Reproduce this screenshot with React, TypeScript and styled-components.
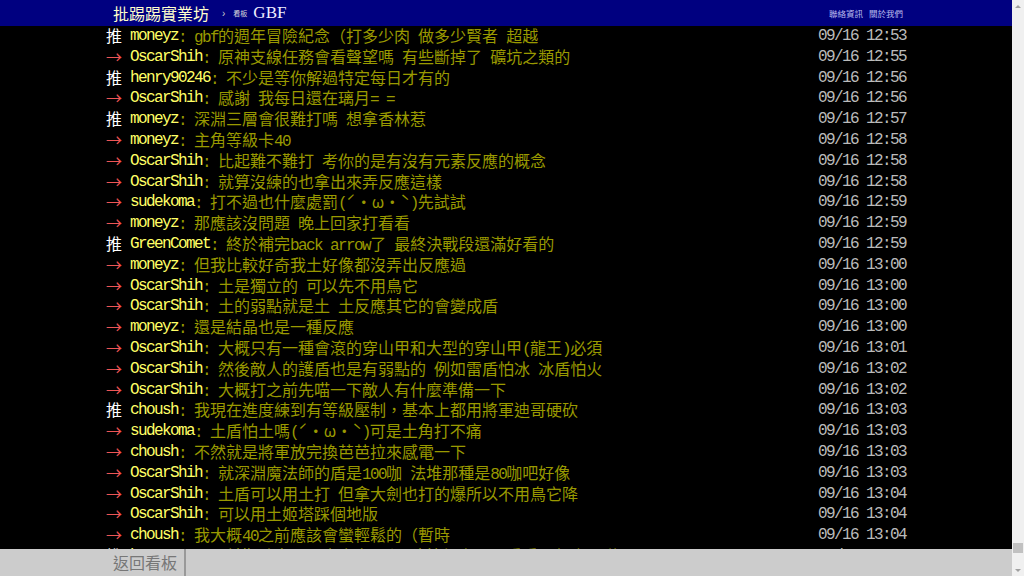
import styled, { createGlobalStyle } from "styled-components";

const GlobalStyle = createGlobalStyle`
  html, body {
    margin: 0;
    padding: 0;
    background: #000;
    overflow: hidden;
  }
`;

const Page = styled.div`
  display: flex;
  width: 100vw;
  height: 100vh;
`;

const Main = styled.div`
  flex: 1;
  min-width: 0;
  display: flex;
  flex-direction: column;
`;

const TopBar = styled.div`
  height: 26px;
  flex-shrink: 0;
  background: #000080;
  display: flex;
  justify-content: center;
`;

const TopInner = styled.div`
  width: 800px;
  box-sizing: border-box;
  padding: 0 3px 0 7px;
  display: flex;
  align-items: center;
`;

const Logo = styled.a`
  font-family: "Noto Sans CJK TC", sans-serif;
  font-size: 16px;
  color: #ffffcc;
  line-height: 26px;
`;

const Crumb = styled.span`
  font-family: "Liberation Sans", sans-serif;
  font-size: 10px;
  color: #ccc;
  margin: 0 8px 0 13px;
`;

const BoardLabel = styled.span`
  font-family: "Noto Sans CJK TC", sans-serif;
  font-size: 7px;
  color: #ddd;
  margin-right: 6px;
`;

const BoardName = styled.span`
  font-family: "Liberation Serif", serif;
  font-size: 17px;
  color: #eef;
`;

const Links = styled.div`
  margin-left: auto;
  display: flex;
  gap: 6px;
`;

const SmallLink = styled.a`
  font-family: "Noto Sans CJK TC", sans-serif;
  font-size: 8.5px;
  color: #bbe;
`;

const Content = styled.div`
  flex: 1;
  overflow: hidden;
  background: #000;
`;

const Column = styled.div`
  width: 800px;
  margin: -1px auto 0;
`;

const Row = styled.div`
  height: 20.8px;
  line-height: 20.8px;
  display: flex;
  justify-content: space-between;
  white-space: pre;
  font-size: 16px;
`;

const Left = styled.div`
  display: flex;
`;

const Tag = styled.span<{ $push: boolean }>`
  color: ${({ $push }) => ($push ? "#fff" : "#ee5555")};
`;

const User = styled.span`
  color: #ffff66;
`;

const Text = styled.span`
  color: #999900;
`;

const Time = styled.span`
  color: #bbb;
`;

const Ascii = styled.span`
  font-family: "Liberation Mono", monospace;
  letter-spacing: -1.6px;
`;

const Wide = styled.span`
  font-family: "Noto Sans CJK TC", sans-serif;
`;

const BottomBar = styled.div`
  height: 27px;
  flex-shrink: 0;
  background: #cccccc;
  display: flex;
  justify-content: center;
`;

const BottomInner = styled.div`
  width: 800px;
  display: flex;
`;

const BackButton = styled.a`
  padding: 0 7px;
  border-right: 2px solid #999;
  line-height: 27px;
  font-family: "Noto Sans CJK TC", sans-serif;
  font-size: 16px;
  color: #777;
`;

const Scrollbar = styled.div`
  width: 12px;
  flex-shrink: 0;
  background: #f0f0f0;
  display: flex;
  flex-direction: column;
  align-items: center;
`;

const ArrowBox = styled.div`
  height: 12px;
  display: flex;
  align-items: center;
  justify-content: center;
`;

const Arrow = styled.div<{ $down?: boolean }>`
  width: 0;
  height: 0;
  border-left: 3px solid transparent;
  border-right: 3px solid transparent;
  ${({ $down }) =>
    $down ? "border-top: 3px solid #a0a0a0;" : "border-bottom: 3px solid #a0a0a0;"}
`;

const Track = styled.div`
  flex: 1;
  display: flex;
  flex-direction: column;
  justify-content: flex-end;
  padding-bottom: 11px;
`;

const Thumb = styled.div`
  width: 10px;
  height: 10px;
  background: #c1c1c1;
`;

// ascii runs get the half-width font, everything else the CJK one
const Mixed = ({ text }: { text: string }) => (
  <>
    {text
      .split(/([\x20-\x7e]+)/)
      .filter(Boolean)
      .map((p, i) =>
        /^[\x20-\x7e]+$/.test(p) ? <Ascii key={i}>{p}</Ascii> : <Wide key={i}>{p}</Wide>
      )}
  </>
);

type Push = [boolean, string, string, string];

const pushes: Push[] = [
  [true, "moneyz", "gbf的週年冒險紀念（打多少肉 做多少賢者 超越", "12:53"],
  [false, "OscarShih", "原神支線任務會看聲望嗎 有些斷掉了 礦坑之類的", "12:55"],
  [true, "henry90246", "不少是等你解過特定每日才有的", "12:56"],
  [false, "OscarShih", "感謝 我每日還在璃月= =", "12:56"],
  [true, "moneyz", "深淵三層會很難打嗎 想拿香林惹", "12:57"],
  [false, "moneyz", "主角等級卡40", "12:58"],
  [false, "OscarShih", "比起難不難打 考你的是有沒有元素反應的概念", "12:58"],
  [false, "OscarShih", "就算沒練的也拿出來弄反應這樣", "12:58"],
  [false, "sudekoma", "打不過也什麼處罰(ˊ・ω・ˋ)先試試", "12:59"],
  [false, "moneyz", "那應該沒問題 晚上回家打看看", "12:59"],
  [true, "GreenComet", "終於補完back arrow了 最終決戰段還滿好看的", "12:59"],
  [false, "moneyz", "但我比較好奇我土好像都沒弄出反應過", "13:00"],
  [false, "OscarShih", "土是獨立的 可以先不用鳥它", "13:00"],
  [false, "OscarShih", "土的弱點就是土 土反應其它的會變成盾", "13:00"],
  [false, "moneyz", "還是結晶也是一種反應", "13:00"],
  [false, "OscarShih", "大概只有一種會滾的穿山甲和大型的穿山甲(龍王)必須", "13:01"],
  [false, "OscarShih", "然後敵人的護盾也是有弱點的 例如雷盾怕冰 冰盾怕火", "13:02"],
  [false, "OscarShih", "大概打之前先喵一下敵人有什麼準備一下", "13:02"],
  [true, "choush", "我現在進度練到有等級壓制，基本上都用將軍迪哥硬砍", "13:03"],
  [false, "sudekoma", "土盾怕土嗎(ˊ・ω・ˋ)可是土角打不痛", "13:03"],
  [false, "choush", "不然就是將軍放完換芭芭拉來感電一下", "13:03"],
  [false, "OscarShih", "就深淵魔法師的盾是100咖 法堆那種是80咖吧好像", "13:03"],
  [false, "OscarShih", "土盾可以用土打 但拿大劍也打的爆所以不用鳥它降", "13:04"],
  [false, "OscarShih", "可以用土姬塔踩個地版", "13:04"],
  [false, "choush", "我大概40之前應該會蠻輕鬆的（暫時", "13:04"],
  [true, "henry90246", "前期確實是不太會卡 到冒險等級高了再看看要怎麼配隊", "13:05"],
];

export default function App() {
  return (
    <>
      <GlobalStyle />
      <Page>
        <Main>
          <TopBar>
            <TopInner>
              <Logo>批踢踢實業坊</Logo>
              <Crumb>›</Crumb>
              <BoardLabel>看板</BoardLabel>
              <BoardName>GBF</BoardName>
              <Links>
                <SmallLink>聯絡資訊</SmallLink>
                <SmallLink>關於我們</SmallLink>
              </Links>
            </TopInner>
          </TopBar>
          <Content>
            <Column>
              {pushes.map(([push, user, text, time], i) => (
                <Row key={i}>
                  <Left>
                    <Tag $push={push}>
                      <Mixed text={(push ? "推" : "→") + " "} />
                    </Tag>
                    <User>
                      <Mixed text={user} />
                    </User>
                    <Text>
                      <Mixed text={": " + text} />
                    </Text>
                  </Left>
                  <Time>
                    <Mixed text={"09/16 " + time} />
                  </Time>
                </Row>
              ))}
            </Column>
          </Content>
          <BottomBar>
            <BottomInner>
              <BackButton>返回看板</BackButton>
            </BottomInner>
          </BottomBar>
        </Main>
        <Scrollbar>
          <ArrowBox>
            <Arrow />
          </ArrowBox>
          <Track>
            <Thumb />
          </Track>
          <ArrowBox>
            <Arrow $down />
          </ArrowBox>
        </Scrollbar>
      </Page>
    </>
  );
}
